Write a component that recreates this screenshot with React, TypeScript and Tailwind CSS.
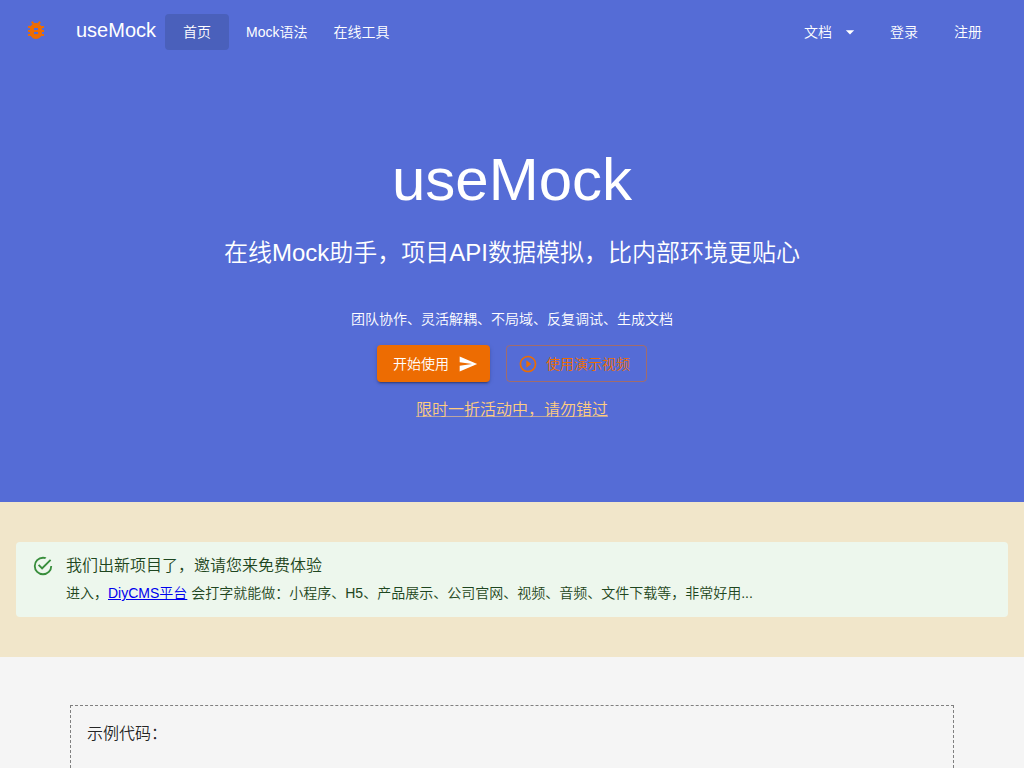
import {
  MdArrowDropDown,
  MdBugReport,
  MdPlayCircleOutline,
  MdSend,
} from 'react-icons/md'

interface NavLinkItem {
  href: string
  label: string
  active?: boolean
}

const mainLinks: NavLinkItem[] = [
  { href: '#home', label: '首页', active: true },
  { href: '#syntax', label: 'Mock语法' },
  { href: '#tools', label: '在线工具' },
]

const userLinks: NavLinkItem[] = [
  { href: '#login', label: '登录' },
  { href: '#register', label: '注册' },
]

function SuccessIcon() {
  return (
    <svg viewBox="0 0 24 24" className="size-[22px] shrink-0 fill-[#388e3c]" aria-hidden="true">
      <path d="M20,12A8,8 0 0,1 12,20A8,8 0 0,1 4,12A8,8 0 0,1 12,4C12.76,4 13.5,4.11 14.2,4.31L15.77,2.74C14.61,2.26 13.34,2 12,2A10,10 0 0,0 2,12A10,10 0 0,0 12,22A10,10 0 0,0 22,12M7.91,10.08L6.5,11.5L11,16L21,6L19.59,4.58L11,13.17L7.91,10.08Z" />
    </svg>
  )
}

function AppBar() {
  return (
    <header className="flex h-16 items-center px-6">
      <a href="#home" className="flex items-center pb-1 text-xl">
        <MdBugReport size={24} className="mr-7 text-[#ed6c02]" />
        useMock
      </a>

      <nav className="ml-[9px] flex gap-2 text-sm" aria-label="主导航">
        {mainLinks.map(item => (
          <a
            key={item.href}
            href={item.href}
            className={`flex h-9 min-w-16 items-center justify-center rounded px-[9px] ${
              item.active ? 'bg-[#4a60bb]' : 'hover:bg-[#4a60bb]'
            }`}
          >
            {item.label}
          </a>
        ))}
      </nav>

      <div className="ml-auto flex items-center text-sm">
        <button type="button" className="mr-2 flex h-9 items-center gap-2 rounded pl-2 pr-1">
          文档
          <MdArrowDropDown size={20} />
        </button>
        {userLinks.map(item => (
          <a
            key={item.href}
            href={item.href}
            className="flex h-9 min-w-16 items-center justify-center rounded px-2"
          >
            {item.label}
          </a>
        ))}
      </div>
    </header>
  )
}

function Hero() {
  return (
    <section className="flex flex-col items-center px-6 pt-20 pb-20 text-center">
      <h1 className="text-[60px] leading-[72px]">useMock</h1>
      <p className="mt-5 text-2xl leading-[34px]">
        在线Mock助手，项目API数据模拟，比内部环境更贴心
      </p>
      <p className="mt-[39px] text-sm">团队协作、灵活解耦、不局域、反复调试、生成文档</p>
      <div className="mt-4 flex gap-4 text-sm">
        <button
          type="button"
          className="flex h-[37px] items-center gap-[9px] rounded bg-[#ed6c02] pr-3 pl-4 shadow-[0_3px_1px_-2px_rgba(0,0,0,0.2),0_2px_2px_0_rgba(0,0,0,0.14),0_1px_5px_0_rgba(0,0,0,0.12)]"
        >
          开始使用
          <MdSend size={20} />
        </button>
        <button
          type="button"
          className="flex h-[37px] items-center gap-2 rounded border border-[#ed6c02]/50 pr-4 pl-[11px] text-[#ed6c02]"
        >
          <MdPlayCircleOutline size={20} />
          使用演示视频
        </button>
      </div>
      <a
        href="#sale"
        className="mt-4 text-base text-[#ffcc80] underline decoration-[#ffcc80]/60"
      >
        限时一折活动中，请勿错过
      </a>
    </section>
  )
}

function Notice() {
  return (
    <section className="bg-[#f1e6ca] px-4 py-10">
      <div role="status" className="flex gap-3 rounded bg-[#edf7ed] px-4 py-3 text-[#1e4620]">
        <div className="pt-px">
          <SuccessIcon />
        </div>
        <div>
          <h2 className="text-base">我们出新项目了，邀请您来免费体验</h2>
          <p className="mt-1 text-sm leading-[23px]">
            进入，
            <a href="#diycms" className="text-[#0000ee] underline">
              DiyCMS平台
            </a>{' '}
            会打字就能做：小程序、H5、产品展示、公司官网、视频、音频、文件下载等，非常好用...
          </p>
        </div>
      </div>
    </section>
  )
}

export default function App() {
  return (
    <div className="flex min-h-screen flex-col bg-[#f5f5f5] font-['Liberation_Sans','Noto_Sans_CJK_SC',sans-serif] font-[350] text-black/87">
      <div className="bg-[#556cd6] text-white">
        <AppBar />
        <Hero />
      </div>
      <Notice />
      <main className="flex grow flex-col px-[70px] pt-12">
        <div className="grow border border-b-0 border-dashed border-[#808080] p-4">
          <h2 className="text-base">示例代码：</h2>
        </div>
      </main>
    </div>
  )
}
